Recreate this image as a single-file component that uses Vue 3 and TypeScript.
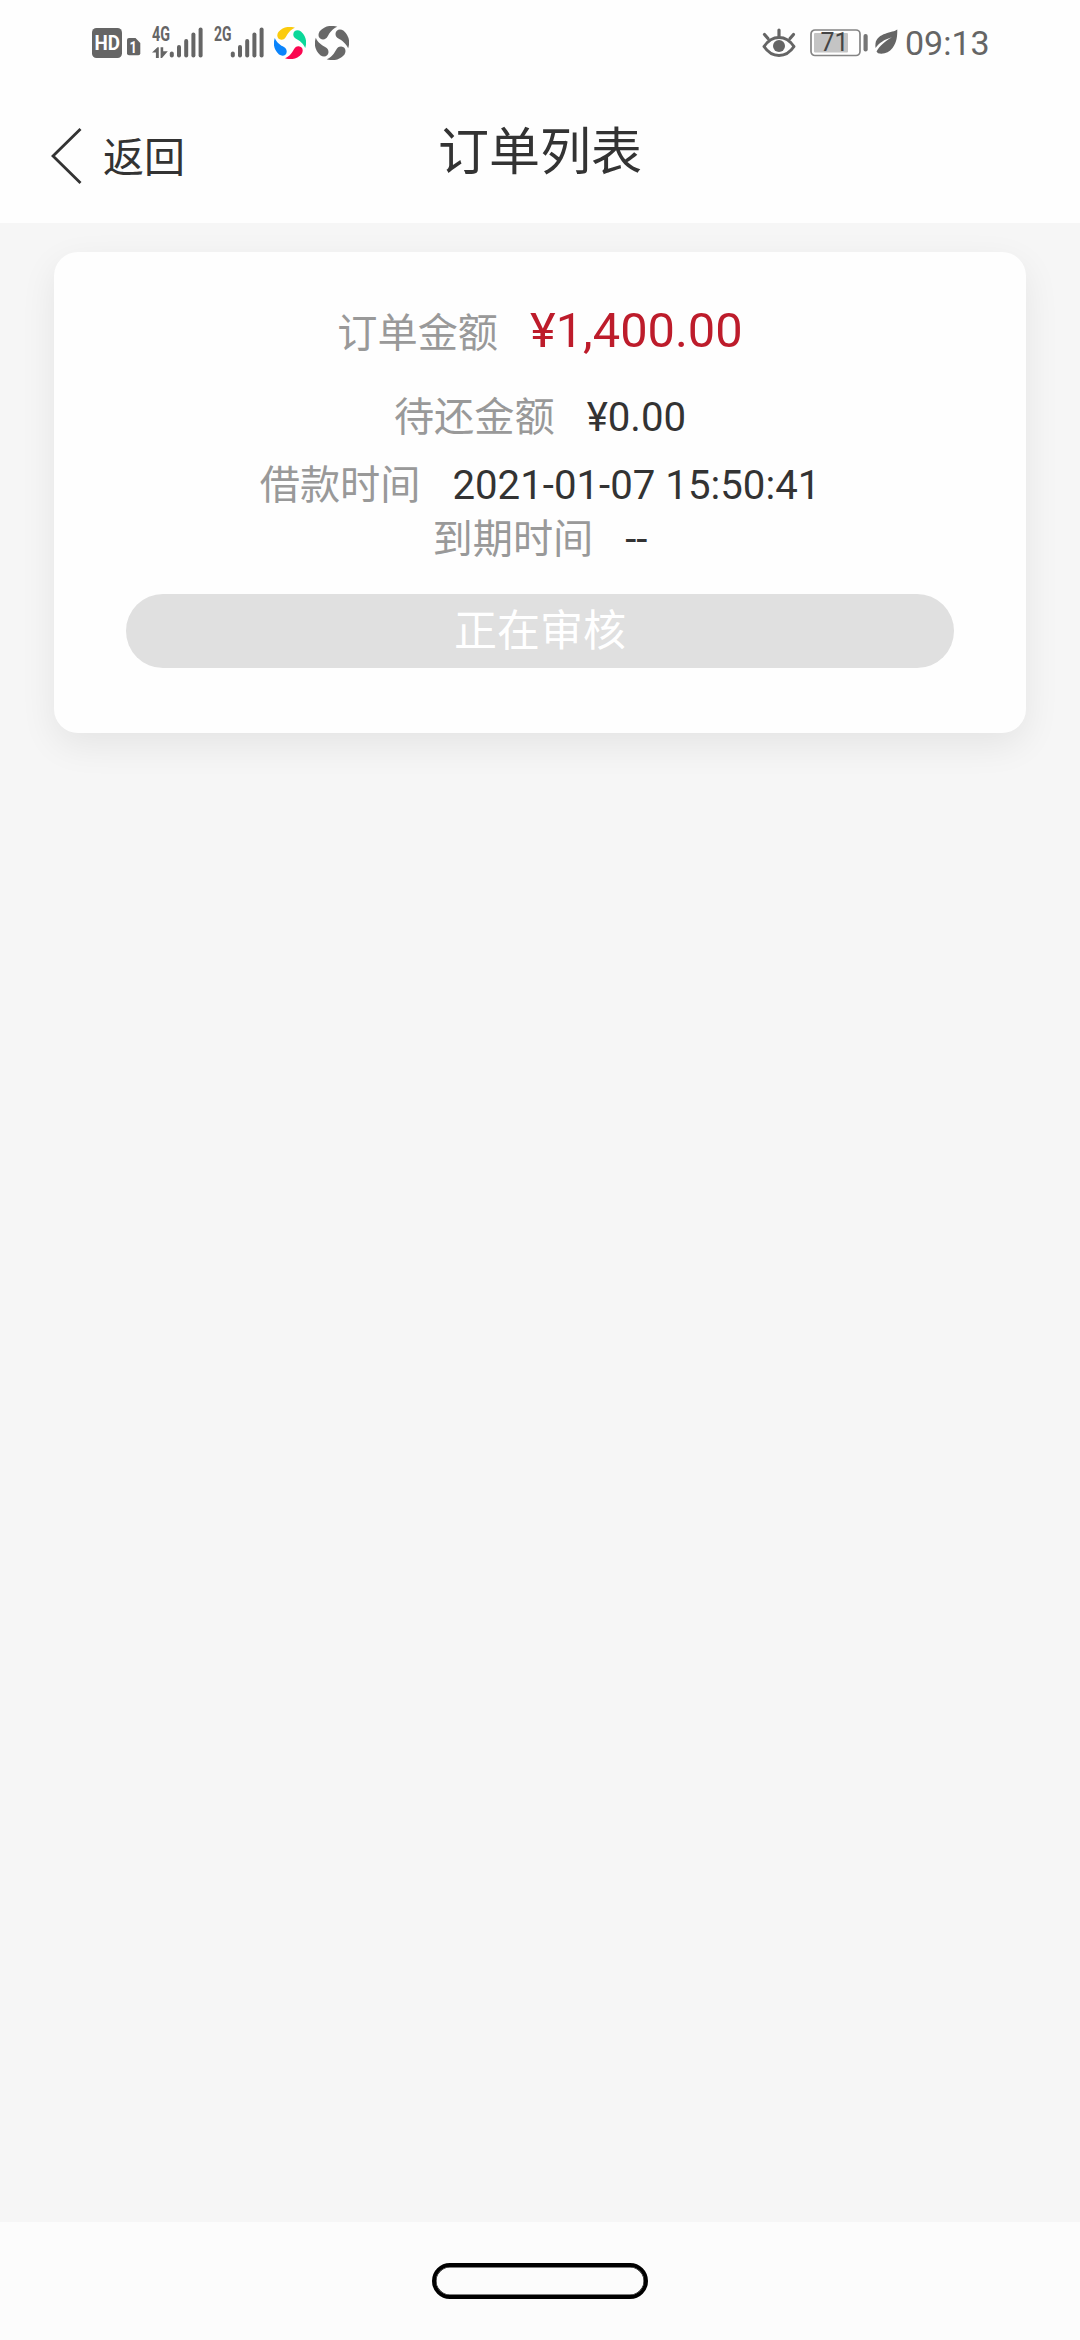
<script setup lang="ts">
interface OrderRow {
  label: string
  value: string
  kind: 'amount' | 'due' | 'plain'
}

const rows: OrderRow[] = [
  { label: '订单金额', value: '¥1,400.00', kind: 'amount' },
  { label: '待还金额', value: '¥0.00', kind: 'due' },
  { label: '借款时间', value: '2021-01-07 15:50:41', kind: 'plain' },
  { label: '到期时间', value: '--', kind: 'plain' },
]

const bars = [
  { x: 2, top: 24.5 },
  { x: 9.2, top: 18 },
  { x: 16.4, top: 12 },
  { x: 23.6, top: 5.5 },
  { x: 30.8, top: 0.5 },
]

const swirlColors = [
  ['#fbcb0d', '#0ad899', '#fa0750', '#0b84fb'],
  ['#686868', '#686868', '#686868', '#686868'],
]
</script>

<template>
  <div class="screen">
    <header class="status">
      <div class="status-left">
        <svg class="hd" width="49" height="30" viewBox="0 0 49 30">
          <rect x="0" y="0" width="30" height="30" rx="4.5" fill="#656565" />
          <text x="2.5" y="21.8" font-size="19.5" font-weight="700" fill="#fff" textLength="25.5" lengthAdjust="spacingAndGlyphs">HD</text>
          <path d="M37 10H43.5L48.3 15V25.3Q48.3 27.3 46.3 27.3H37Q35 27.3 35 25.3V12Q35 10 37 10Z" fill="#656565" />
          <text x="37.4" y="25" font-size="16" font-weight="700" fill="#fff" textLength="7.4" lengthAdjust="spacingAndGlyphs">1</text>
        </svg>
        <svg class="net" width="51" height="44" viewBox="0 -6 51 44">
          <text x="0" y="14" font-size="19.5" font-weight="700" fill="#656565" textLength="18" lengthAdjust="spacingAndGlyphs">4G</text>
          <path d="M0 25.5L5.5 20.2H6.8V31H3.9V25.5ZM8.6 20.2H11.2V24.3H15.8L10 31H8.6Z" fill="#656565" />
          <g transform="translate(17.8 0)" stroke="#656565" stroke-width="4" stroke-linecap="round">
            <line v-for="b in bars" :key="b.x" :x1="b.x" :x2="b.x" :y1="b.top + 2" y2="28.6" />
          </g>
        </svg>
        <svg class="net" width="51" height="44" viewBox="0 -6 51 44">
          <text x="0" y="14" font-size="19.5" font-weight="700" fill="#656565" textLength="17.5" lengthAdjust="spacingAndGlyphs">2G</text>
          <g transform="translate(16.8 0)" stroke="#656565" stroke-width="4" stroke-linecap="round">
            <line v-for="b in bars" :key="b.x" :x1="b.x" :x2="b.x" :y1="b.top + 2" y2="28.6" />
          </g>
        </svg>
        <svg
          v-for="(colors, i) in swirlColors"
          :key="i"
          :class="['swirl', `swirl-${i}`]"
          viewBox="-16 -16 32 32"
        >
          <path
            v-for="(c, n) in colors"
            :key="n"
            :transform="`rotate(${n * 90})`"
            :fill="c"
            d="M5 -15.2A16 16 0 0 0 -11.6 -11C-14 -7.2 -12.3 -3.5 -8.7 -3.3C-4 -3.1 -4 -8 -0.8 -11C1 -13 2.8 -14.4 5 -15.2Z"
          />
        </svg>
      </div>

      <div class="status-right">
        <svg class="eye" width="34" height="30" viewBox="0 0 34 30" fill="none" stroke="#656565" stroke-linecap="round">
          <path d="M2 18.5Q8 9.5 17 9.5Q26 9.5 32 18.5Q26 27.5 17 27.5Q8 27.5 2 18.5Z" stroke-width="3" stroke-linejoin="round" />
          <path d="M17 2V8M2.5 6.5L6 10.5M31.5 6.5L28 10.5" stroke-width="3.2" />
          <circle cx="17" cy="18" r="6" fill="#656565" stroke="none" />
        </svg>
        <svg class="battery" width="58" height="28" viewBox="0 0 58 28">
          <rect x="1" y="1" width="49" height="25.5" rx="4" fill="#fff" stroke="#858585" stroke-width="1.7" />
          <rect x="4" y="4" width="34" height="19.5" rx="1" fill="#c4c4c4" />
          <text x="10.5" y="22" font-size="25.5" fill="#454545" textLength="28" lengthAdjust="spacingAndGlyphs">71</text>
          <rect x="53.5" y="5" width="4.2" height="17.5" rx="2" fill="#757575" />
        </svg>
        <svg class="leaf" width="23" height="26" viewBox="0 0 23 26">
          <path d="M22.3 .5C18 4 2 3.5 .5 14.5Q.2 17 .6 19C4 14 9 10.5 17 8.2C9.500 12.500 4.500 17 1.500 22.500L3 24.300C9 25.500 14 23.500 17.500 19C22 13 22.300 7 22.300 .5Z" fill="#656565" />
        </svg>
        <span class="clock">09:13</span>
      </div>
    </header>

    <nav class="navbar">
      <button class="back" type="button">
        <svg width="31" height="56" viewBox="0 0 31 56" fill="none" stroke="#333" stroke-width="2.8">
          <path d="M29.500 1L2 28L29.500 55" />
        </svg>
        <span>返回</span>
      </button>
      <h1 class="title">订单列表</h1>
    </nav>

    <main class="content">
      <section class="card">
        <div v-for="row in rows" :key="row.label" :class="['row', row.kind]">
          <span class="label">{{ row.label }}</span>
          <span class="value">{{ row.value }}</span>
        </div>
        <button class="state" type="button" disabled>正在审核</button>
      </section>
    </main>

    <footer class="home-bar"><div class="home-pill"></div></footer>
  </div>
</template>

<style>
body {
  margin: 0;
}
</style>

<style scoped>
.screen {
  display: flex;
  flex-direction: column;
  width: 1080px;
  height: 2340px;
  overflow: hidden;
  background: #f6f6f6;
  color: #333;
  font-family: Roboto, "Noto Sans CJK SC", sans-serif;
}
svg {
  display: block;
  flex: none;
}
button {
  border: 0;
  padding: 0;
  font-family: inherit;
}
.status {
  display: flex;
  flex: none;
  justify-content: space-between;
  align-items: center;
  box-sizing: border-box;
  height: 86px;
  padding: 0 91px 0 92px;
  background: #fefefe;
}
.status-left,
.status-right {
  display: flex;
  align-items: center;
}
.net {
  margin-left: 11px;
}
.swirl-0 {
  width: 32px;
  height: 32px;
  margin-left: 9px;
}
.swirl-1 {
  width: 34px;
  height: 34px;
  margin-left: 9px;
}
.battery {
  margin-left: 14px;
}
.leaf {
  margin: -3px 7px 0 7px;
}
.clock {
  width: 84px;
  color: #656565;
  font-size: 34px;
  line-height: 40px;
  white-space: nowrap;
}
.navbar {
  display: grid;
  grid-template-columns: 1fr auto 1fr;
  flex: none;
  align-items: center;
  height: 137px;
  background: #fefefe;
}
.back {
  display: flex;
  align-items: center;
  gap: 20px;
  margin: 2px 0 0 52px;
  background: none;
  color: #333;
  font-size: 41px;
  line-height: 60px;
}
.back svg {
  margin-left: -1px;
}
.back span {
  margin: 4px 0 0 1px;
}
.title {
  grid-column: 2;
  margin: -3px 0 0;
  font-size: 51px;
  font-weight: 400;
  line-height: 74px;
}
.content {
  flex: 1;
  padding: 29px 54px 0;
}
.card {
  display: flex;
  flex-direction: column;
  align-items: center;
  box-sizing: border-box;
  height: 481px;
  padding-top: 52px;
  border-radius: 24px;
  background: #fefefe;
  box-shadow: 0 12px 36px rgba(0, 0, 0, 0.075);
}
.row {
  display: flex;
  align-items: baseline;
  height: 54px;
  gap: 32px;
  font-size: 40.2px;
  line-height: 54px;
  white-space: nowrap;
}
.row.amount {
  margin-bottom: 33px;
}
.row.due {
  margin-bottom: 14px;
}
.label {
  color: #999;
}
.amount .value {
  color: #bd1c2b;
  font-size: 48.8px;
}
.state {
  width: 828px;
  height: 74px;
  margin-top: 27px;
  border-radius: 37px;
  background: #e0e0e0;
  color: #fff;
  font-size: 43px;
  line-height: 70px;
}
.home-bar {
  display: flex;
  flex: none;
  align-items: center;
  justify-content: center;
  height: 118px;
  background: #fcfcfc;
}
.home-pill {
  box-sizing: border-box;
  width: 216px;
  height: 36px;
  border: 4px solid #000;
  border-radius: 18px;
  box-shadow: inset 0 0 0 0.5px #000;
}
</style>
